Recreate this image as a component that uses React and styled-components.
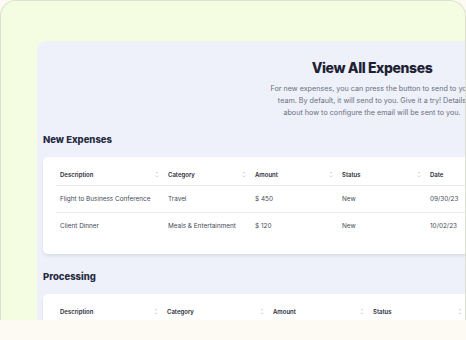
import React from 'react'
import styled, { createGlobalStyle } from 'styled-components'

const Global = createGlobalStyle`
  body {
    margin: 0;
    background: #fcfaf2;
    font-family: Inter, "Noto Sans", sans-serif;
  }
`

const Page = styled.div`
  width: 466px;
  height: 340px;
  overflow: hidden;
  display: flex;
  flex-direction: column;
`

const Frame = styled.div`
  box-sizing: border-box;
  height: 320px;
  flex-shrink: 0;
  background: #f4fde1;
  border: 1px solid #dde2cf;
  border-bottom: none;
  border-radius: 16px 16px 0 0;
  padding: 40px 0 0 36px;
  overflow: hidden;
`

const Panel = styled.div`
  width: 670px;
  min-height: 400px;
  background: #eef1fa;
  border-radius: 9px 0 0 0;
  padding: 17px 6px 0;
  box-sizing: border-box;
`

const Header = styled.header`
  display: flex;
  flex-direction: column;
  align-items: center;
  text-align: center;
`

const Title = styled.h1`
  margin: 0;
  font-size: 14px;
  line-height: 20px;
  font-weight: 800;
  letter-spacing: -0.4px;
  color: #1d2133;
`

const Intro = styled.p`
  margin: 5px 0 0;
  width: 208px;
  font-size: 7.2px;
  line-height: 12px;
  color: #6a6f7e;
`

const SectionTitle = styled.h2`
  margin: ${p => p.$top}px 0 0;
  font-size: 9.5px;
  line-height: 12px;
  font-weight: 800;
  color: #262b3f;
`

const TableCard = styled.div`
  margin-top: 11px;
  background: #ffffff;
  border-radius: 5px;
  padding: 6px 13px 15px;
  box-shadow: 0 2px 3px rgba(40, 45, 60, 0.1);
`

const Row = styled.div`
  display: grid;
  grid-template-columns: ${p => p.$cols};
  height: ${p => (p.$head ? 22 : 26)}px;
  align-items: center;
  border-bottom: ${p => (p.$last ? 'none' : '1px solid #e9ebef')};
`

const HeadCell = styled.div`
  display: flex;
  align-items: center;
  justify-content: space-between;
  padding: 0 5px 0 4px;
  font-size: 6px;
  font-weight: 600;
  color: #2a2e3a;
`

const Cell = styled.div`
  padding: 0 4px;
  font-size: 6.4px;
  color: #454a57;
  white-space: nowrap;
`

const SortIcon = () => (
  <svg width="4" height="7" viewBox="0 0 4 7">
    <path d="M0.6 2.4 L2 1 L3.4 2.4 M0.6 4.6 L2 6 L3.4 4.6" fill="none" stroke="#c3c7cf" strokeWidth="0.7" />
  </svg>
)

const Table = ({ cols, heads, rows }) => (
  <TableCard>
    <Row $head $cols={cols} $last={rows.length === 0}>
      {heads.map(h => (
        <HeadCell key={h}>
          {h}
          <SortIcon />
        </HeadCell>
      ))}
    </Row>
    {rows.map((r, i) => (
      <Row key={i} $cols={cols} $last={i === rows.length - 1}>
        {r.map((c, j) => (
          <Cell key={j}>{c}</Cell>
        ))}
      </Row>
    ))}
  </TableCard>
)

const heads = ['Description', 'Category', 'Amount', 'Status', 'Date', 'Actions']

export default function App() {
  return (
    <Page>
      <Global />
      <Frame>
        <Panel>
          <Header>
            <Title>View All Expenses</Title>
            <Intro>
              For new expenses, you can press the button to send to your team. By default, it will
              send to you. Give it a try! Details about how to configure the email will be sent to you.
            </Intro>
          </Header>
          <SectionTitle $top={15}>New Expenses</SectionTitle>
          <Table
            cols="108px 87px 87px 88px 88px 1fr"
            heads={heads}
            rows={[
              ['Flight to Business Conference', 'Travel', '$ 450', 'New', '09/30/23', ''],
              ['Client Dinner', 'Meals & Entertainment', '$ 120', 'New', '10/02/23', ''],
            ]}
          />
          <SectionTitle $top={17}>Processing</SectionTitle>
          <Table
            cols="107px 106px 100px 98px 98px 1fr"
            heads={heads}
            rows={[
              ['Hotel Stay', 'Lodging', '$ 600', 'Processing', '09/28/23', ''],
            ]}
          />
        </Panel>
      </Frame>
    </Page>
  )
}
